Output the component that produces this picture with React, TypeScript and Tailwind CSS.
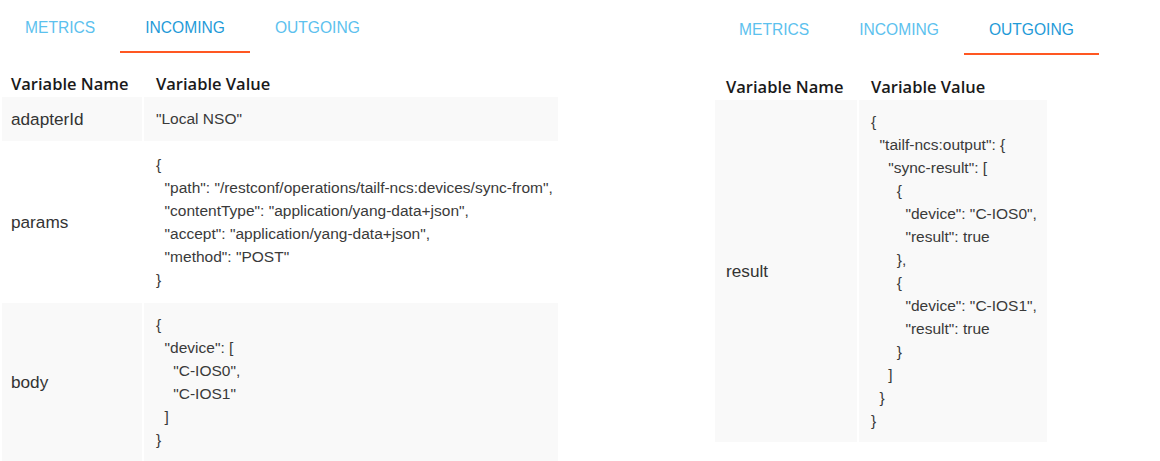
import React from "react";

type Row = { name: string; value: string };

const leftRows: Row[] = [
  { name: "adapterId", value: '"Local NSO"' },
  {
    name: "params",
    value: `{
  "path": "/restconf/operations/tailf-ncs:devices/sync-from",
  "contentType": "application/yang-data+json",
  "accept": "application/yang-data+json",
  "method": "POST"
}`,
  },
  {
    name: "body",
    value: `{
  "device": [
    "C-IOS0",
    "C-IOS1"
  ]
}`,
  },
];

const rightRows: Row[] = [
  {
    name: "result",
    value: `{
  "tailf-ncs:output": {
    "sync-result": [
      {
        "device": "C-IOS0",
        "result": true
      },
      {
        "device": "C-IOS1",
        "result": true
      }
    ]
  }
}`,
  },
];

const TABS = ["METRICS", "INCOMING", "OUTGOING"];

function Tabs({ active }: { active: string }) {
  return (
    <div className="flex h-[53px]">
      {TABS.map((t) => (
        <div
          key={t}
          className={
            t === active
              ? "flex h-full items-center px-[25px] pt-[4px] border-b-2 border-[#ff5722] text-[15.6px] text-[#1f9bd8]"
              : "flex h-full items-center px-[25px] pt-[4px] border-b-2 border-transparent text-[15.6px] text-[#5cc1ee]"
          }
          style={{ fontFamily: '"Liberation Sans", Arial, sans-serif' }}
        >
          {t}
        </div>
      ))}
    </div>
  );
}

function Table({
  rows,
  wide,
  pad1,
}: {
  rows: Row[];
  wide: boolean;
  pad1: string;
}) {
  return (
    <div className={`grid gap-[2px] ${wide ? "grid-cols-[140px_414px]" : "grid-cols-[142px_188px]"}`}>
      <div
        className={`h-[22px] leading-[22px] text-[16.5px] font-semibold text-[#1a1a1a] ${pad1}`}
        style={{ fontFamily: '"Open Sans", sans-serif' }}
      >
        Variable Name
      </div>
      <div
        className="h-[22px] leading-[22px] pl-[12px] text-[16.5px] font-semibold text-[#1a1a1a]"
        style={{ fontFamily: '"Open Sans", sans-serif' }}
      >
        Variable Value
      </div>
      {rows.map((r, i) => {
        const bg = i % 2 === 0 ? "bg-[#f9f9f9]" : "bg-white";
        const multi = r.value.includes("\n");
        return (
          <React.Fragment key={r.name}>
            <div
              className={`flex items-center ${bg} ${pad1} text-[17.2px] leading-[24px] text-[#333333]`}
              style={{ fontFamily: '"Liberation Sans", Arial, sans-serif' }}
            >
              {r.name}
            </div>
            <div
              className={`${bg} pl-[12px] py-[10px] text-[15.5px] ${
                multi ? "leading-[23px]" : "leading-[24px]"
              } whitespace-pre text-[#3a3a3a]`}
              style={{ fontFamily: '"Liberation Sans", Arial, sans-serif' }}
            >
              {r.value}
            </div>
          </React.Fragment>
        );
      })}
    </div>
  );
}

export default function App() {
  return (
    <div className="flex w-[1160px] h-[461px] bg-white overflow-hidden">
      <div className="w-[560px] shrink-0">
        <Tabs active="INCOMING" />
        <div className="mt-[20px] pl-[2px]">
          <Table rows={leftRows} wide pad1="pl-[9px]" />
        </div>
      </div>
      <div className="ml-[154px] pt-[2px] shrink-0">
        <Tabs active="OUTGOING" />
        <div className="mt-[21px] pl-[1px]">
          <Table rows={rightRows} wide={false} pad1="pl-[11px]" />
        </div>
      </div>
    </div>
  );
}
